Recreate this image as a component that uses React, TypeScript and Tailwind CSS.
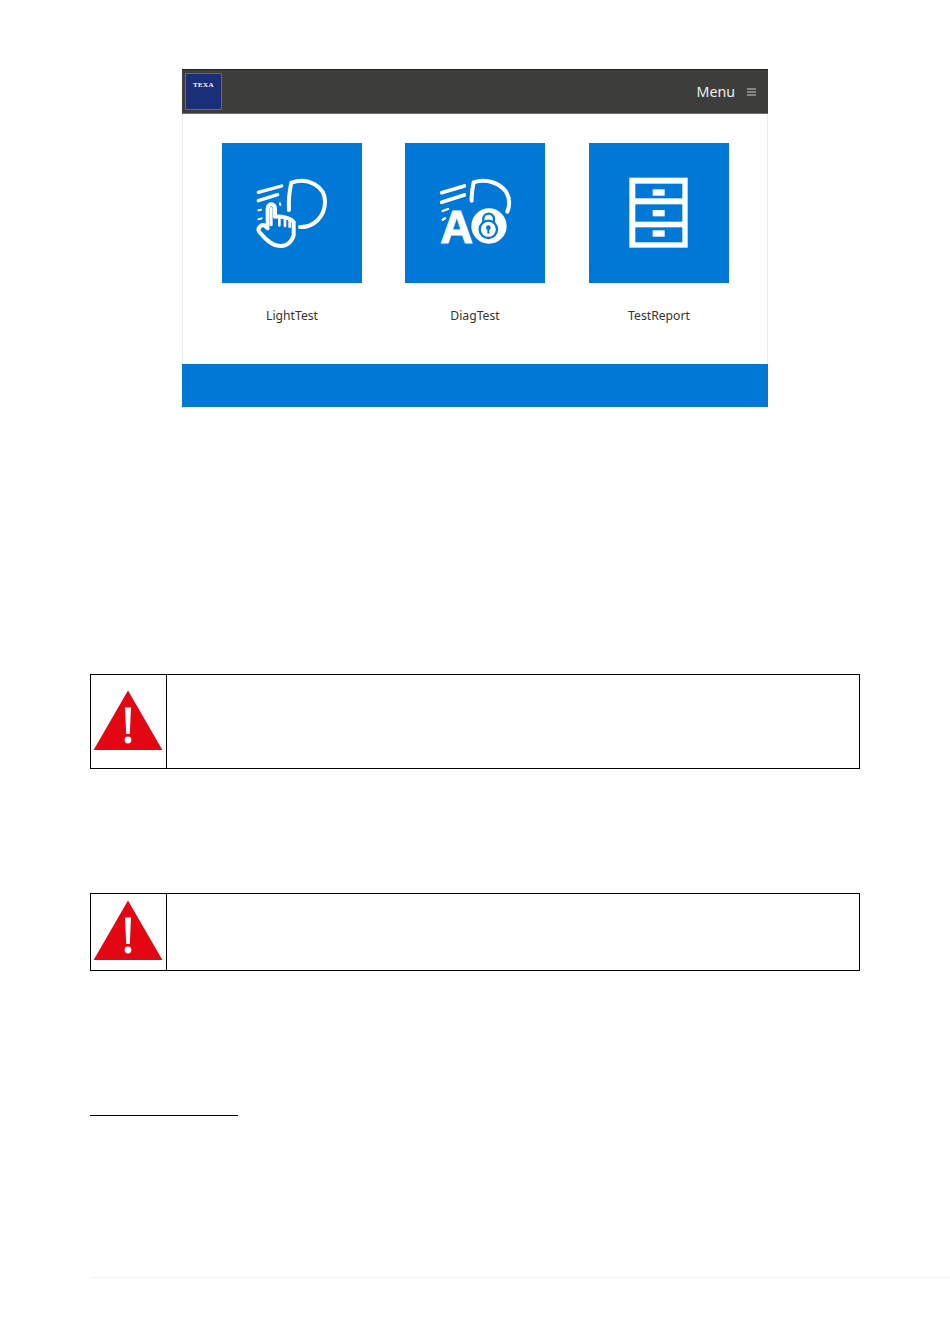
const white = "#ffffff";
const blue = "#0078d7";

function LightIcon() {
  return (
    <svg width="140" height="140" viewBox="-24 -51 420 420" fill="none">
      <g stroke={white} strokeLinecap="round" strokeLinejoin="round">
        <path d="M85 97L155 78M85 122L143 104" strokeWidth="10" />
        <path d="M85 151L93 149M85 178L95 175M150 130L151 135" strokeWidth="6" />
        <path d="M177 150C175 120 178 95 184 68C235 50 285 80 285 125C285 170 250 203 210 201" strokeWidth="12" />
        <path
          d="M113 197L113 146C113 128 135 128 135 146L135 170C150 168 182 172 191 186L191 226C185 245 172 258 150 258C125 258 105 236 88 216C80 204 95 190 106 198L113 205"
          fill={blue}
          strokeWidth="12"
        />
        <path d="M124 145L124 195M148 176L148 196M165 178L165 198M179 182L179 200" strokeWidth="8" />
      </g>
    </svg>
  );
}

function DiagIcon() {
  return (
    <svg width="140" height="140" viewBox="-45 -51 420 420" fill="none">
      <g stroke={white} strokeLinecap="round">
        <path d="M65 98L133 78M65 127L133 105" strokeWidth="11" />
        <path d="M68 153L84 147M68 179L75 175" strokeWidth="7" />
        <path d="M155 122C154 100 157 85 161 67C200 54 240 70 258 95C270 115 270 135 262 155" strokeWidth="12" />
      </g>
      <text
        x="61"
        y="249"
        fontFamily="'Liberation Sans', sans-serif"
        fontWeight="700"
        fontSize="136"
        fill={white}
        stroke={white}
        strokeWidth="3"
      >
        A
      </text>
      <circle cx="207" cy="198" r="56" fill={white} stroke={blue} strokeWidth="6" />
      <path d="M190 188V178C190 155 222 155 222 178V188" stroke={blue} strokeWidth="7" />
      <circle cx="205" cy="208" r="26" stroke={blue} strokeWidth="7" />
      <circle cx="205" cy="203" r="7" fill={blue} />
      <path d="M205 205V221" stroke={blue} strokeWidth="6" />
    </svg>
  );
}

function ReportIcon() {
  return (
    <svg width="140" height="140" viewBox="-63 -66 420 420">
      <rect x="58" y="38" width="175" height="210" fill={white} />
      <rect x="76" y="56" width="141" height="44" fill={blue} />
      <rect x="76" y="118" width="141" height="52" fill={blue} />
      <rect x="76" y="187" width="141" height="45" fill={blue} />
      <rect x="128" y="73" width="36" height="19" fill={white} />
      <rect x="128" y="135" width="36" height="19" fill={white} />
      <rect x="128" y="196" width="36" height="19" fill={white} />
    </svg>
  );
}

function WarningIcon() {
  return (
    <svg width="70" height="61" viewBox="0 0 70 61" className="block">
      <path d="M35 0.5L69.4 60H0.6Z" fill="#e30613" />
      <path d="M32 17.5H38L36.8 44H33.2Z" fill={white} />
      <circle cx="35" cy="50" r="3.4" fill={white} />
    </svg>
  );
}

function Tile({ label, children }: { label: string; children: React.ReactNode }) {
  return (
    <div className="flex w-[140px] flex-col items-center">
      <div className="flex h-[140px] w-[140px] bg-[#0078d7]">{children}</div>
      <div className="mt-[23px] whitespace-nowrap text-[12.2px] leading-[20px] text-[#333333]">{label}</div>
    </div>
  );
}

function Warning({ height, top }: { height: string; top: string }) {
  return (
    <div className={`flex border border-black ${height}`}>
      <div className={`flex w-[76px] shrink-0 justify-center border-r border-black pr-[1px] ${top}`}>
        <WarningIcon />
      </div>
      <div className="flex-1" />
    </div>
  );
}

export default function App() {
  return (
    <div className="relative h-[1344px] w-[950px] overflow-hidden bg-white font-['Noto_Sans','Open_Sans',sans-serif]">
      <div className="pt-[69px]">
        <div className="ml-[182px] w-[586px]">
          <header className="flex h-[45px] items-center justify-between border-t border-b border-t-[#222222] border-b-[#6b6b6a] bg-[#3d3d3c] pl-[3px] pr-[12px]">
            <div className="flex h-[37px] w-[37px] justify-center border border-[#5a6797] bg-[#1b2e78] pt-[6px] font-['Liberation_Serif',serif] text-[7px] font-bold leading-[10px] tracking-[0.4px] text-white">
              TEXA
            </div>
            <div className="flex items-center gap-[12px] text-white">
              <span className="text-[14.2px] leading-[20px] text-[#f0f0f0]">Menu</span>
              <svg width="9" height="8" viewBox="0 0 9 8" className="mt-[1px]">
                <path d="M0 1H9M0 4H9M0 7H9" stroke="#d0d0d0" strokeWidth="1" />
              </svg>
            </div>
          </header>
          <div className="flex h-[250px] border-x border-[#ececec] pl-[39px] pt-[29px]">
            <Tile label="LightTest">
              <LightIcon />
            </Tile>
            <div className="w-[43px]" />
            <Tile label="DiagTest">
              <DiagIcon />
            </Tile>
            <div className="w-[44px]" />
            <Tile label="TestReport">
              <ReportIcon />
            </Tile>
          </div>
          <div className="h-[43px] bg-[#0078d7]" />
        </div>

        <div className="ml-[90px] mr-[90px] mt-[267px]">
          <Warning height="h-[95px]" top="pt-[15px]" />
          <div className="h-[124px]" />
          <Warning height="h-[78px]" top="pt-[6px]" />
        </div>

        <div className="ml-[90px] mt-[144px] h-px w-[148px] bg-black" />
      </div>
      <div className="ml-[90px] mt-[161px] h-[1px] bg-[#f3f3f3]" />
    </div>
  );
}
